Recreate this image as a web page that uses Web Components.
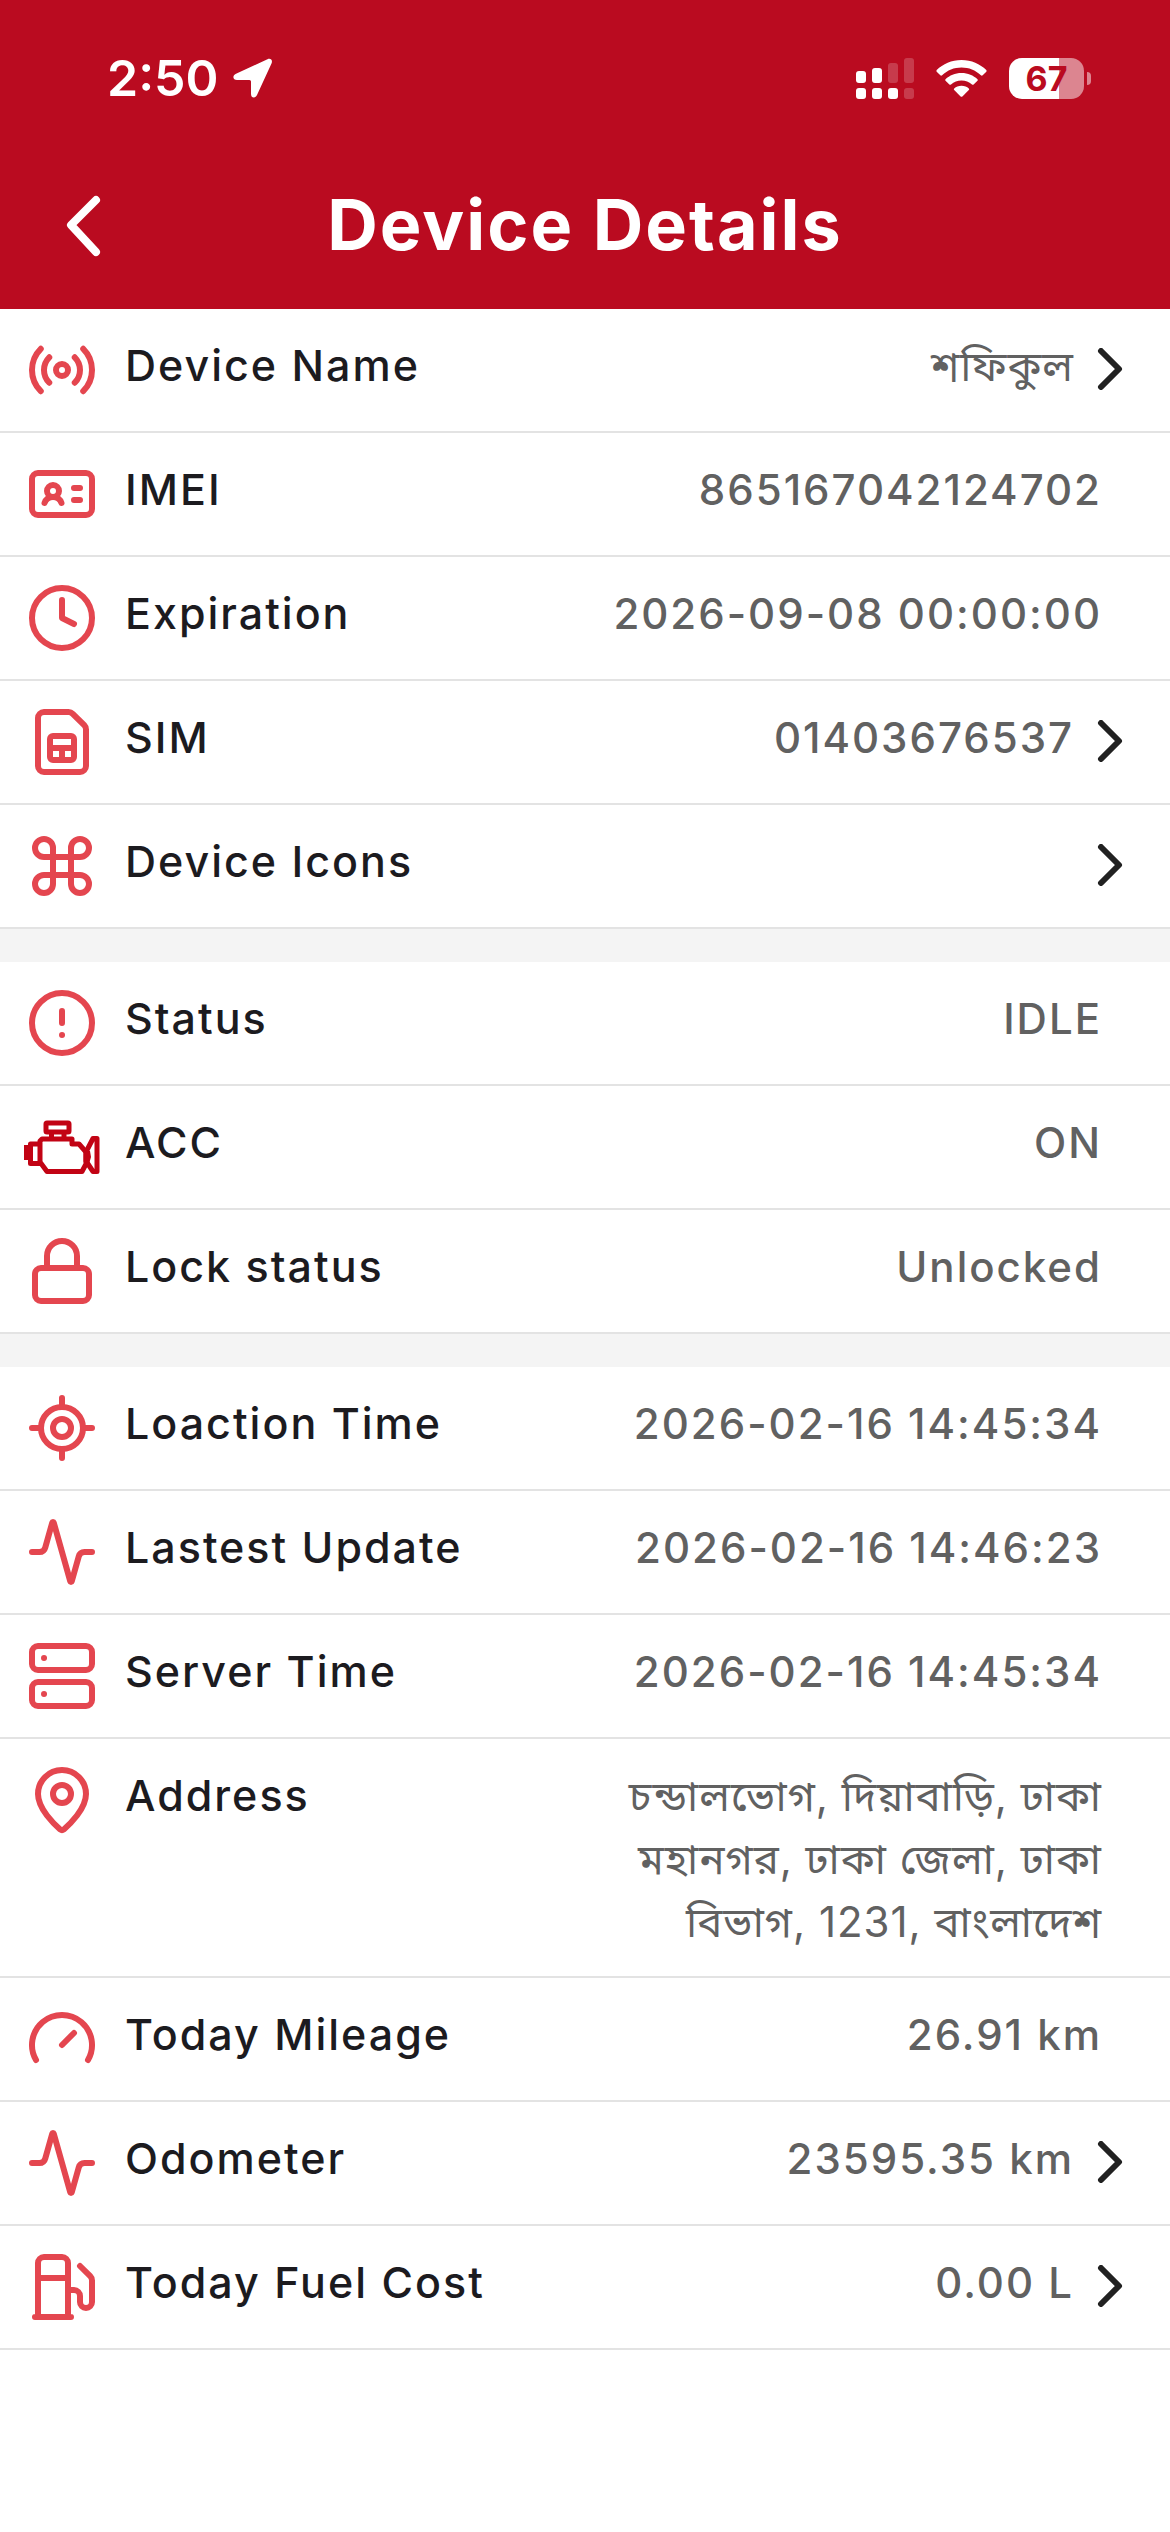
<!DOCTYPE html>
<html lang="en">
<head>
<meta charset="UTF-8">
<meta name="viewport" content="width=device-width, initial-scale=1.0">
<title>Device Details</title>
<style>
  body {
    margin: 0;
    background: #fff;
    font-family: Inter, "Noto Sans Bengali", "Noto Sans", sans-serif;
    color: #1c1b1f;
  }
</style>
</head>
<body>

<device-page>
  <status-bar slot="top" time="2:50" battery="67"></status-bar>
  <title-bar slot="top">Device Details</title-bar>

  <detail-group>
    <detail-row icon="radio" label="Device Name" link lang="bn">শফিকুল</detail-row>
    <detail-row icon="id" label="IMEI">865167042124702</detail-row>
    <detail-row icon="clock" label="Expiration">2026-09-08 00:00:00</detail-row>
    <detail-row icon="sim" label="SIM" link>01403676537</detail-row>
    <detail-row icon="command" label="Device Icons" link></detail-row>
  </detail-group>

  <detail-group>
    <detail-row icon="alert" label="Status">IDLE</detail-row>
    <detail-row icon="engine" label="ACC">ON</detail-row>
    <detail-row icon="lock" label="Lock status">Unlocked</detail-row>
  </detail-group>

  <detail-group>
    <detail-row icon="locate" label="Loaction Time">2026-02-16 14:45:34</detail-row>
    <detail-row icon="activity" label="Lastest Update">2026-02-16 14:46:23</detail-row>
    <detail-row icon="server" label="Server Time">2026-02-16 14:45:34</detail-row>
    <detail-row icon="pin" label="Address" lang="bn">চন্ডালভোগ, দিয়াবাড়ি, ঢাকা মহানগর, ঢাকা জেলা, ঢাকা বিভাগ, 1231, বাংলাদেশ</detail-row>
    <detail-row icon="gauge" label="Today Mileage">26.91 km</detail-row>
    <detail-row icon="activity" label="Odometer" link>23595.35 km</detail-row>
    <detail-row icon="fuel" label="Today Fuel Cost" link>0.00 L</detail-row>
  </detail-group>
</device-page>

<script>
// 24x24 stroke icons, the engine has its own box
const ICONS = {
  radio: '<path d="M16.247 7.761a6 6 0 0 1 0 8.478M19.075 4.933a10 10 0 0 1 0 14.134M4.925 19.067a10 10 0 0 1 0-14.134M7.753 16.239a6 6 0 0 1 0-8.478"/><circle cx="12" cy="12" r="2"/>',
  id: '<path d="M16 10h2M16 14h2M6.17 15a3 3 0 0 1 5.66 0"/><circle cx="9" cy="11" r="2"/><rect x="2" y="5" width="20" height="14" rx="2"/>',
  clock: '<circle cx="12" cy="12" r="10"/><path d="M12 6v6l4 2"/>',
  sim: '<path d="M12 14v4M8 14h8M14.172 2a2 2 0 0 1 1.414.586l3.828 3.828A2 2 0 0 1 20 7.828V20a2 2 0 0 1-2 2H6a2 2 0 0 1-2-2V4a2 2 0 0 1 2-2z"/><rect x="8" y="10" width="8" height="8" rx="1"/>',
  command: '<path d="M15 6v12a3 3 0 1 0 3-3H6a3 3 0 1 0 3 3V6a3 3 0 1 0-3 3h12a3 3 0 1 0-3-3"/>',
  alert: '<circle cx="12" cy="12" r="10"/><path d="M12 8v4M12 16h.01"/>',
  lock: '<rect x="3" y="11" width="18" height="11" rx="2"/><path d="M7 11V7a5 5 0 0 1 10 0v4"/>',
  locate: '<path d="M2 12h3M19 12h3M12 2v3M12 19v3"/><circle cx="12" cy="12" r="7"/><circle cx="12" cy="12" r="3"/>',
  activity: '<path d="M22 12h-2.48a2 2 0 0 0-1.93 1.46l-2.35 8.36a.25.25 0 0 1-.48 0L9.24 2.18a.25.25 0 0 0-.48 0l-2.35 8.36A2 2 0 0 1 4.49 12H2"/>',
  server: '<rect x="2" y="2" width="20" height="8" rx="2"/><rect x="2" y="14" width="20" height="8" rx="2"/><path d="M6 6h.01M6 18h.01"/>',
  pin: '<path d="M20 10c0 4.993-5.539 10.193-7.399 11.799a1 1 0 0 1-1.202 0C9.539 20.193 4 14.993 4 10a8 8 0 0 1 16 0"/><circle cx="12" cy="10" r="3"/>',
  gauge: '<path d="m12 14 4-4M3.34 19a10 10 0 1 1 17.32 0"/>',
  fuel: '<path d="M3 22h12M4 9h10M14 22V4a2 2 0 0 0-2-2H6a2 2 0 0 0-2 2v18M14 13h2a2 2 0 0 1 2 2v2a2 2 0 0 0 4 0V9.83a2 2 0 0 0-.59-1.42L18 5"/>'
};

const ENGINE = `
  <svg class="engine" viewBox="0 0 72 72" aria-hidden="true">
    <rect x="20" y="12" width="23" height="9" rx="1"/>
    <path d="M25.500 23v4M38 23v4"/>
    <path d="M16 28H46V33H53L60 41V53L56 60.500H21L14 51V30z"/>
    <path d="M14 33H4.500V52.500H14"/>
    <path d="M60 41L67 27.500H71V60.500H67L60 50z"/>
    <path class="solid" d="M-2 34H3V49H-2zM58 40H64L65 46L63 53H58z"/>
  </svg>`;

class DevicePage extends HTMLElement {
  constructor() {
    super();
    this.attachShadow({ mode: 'open' }).innerHTML = `
      <style>
        :host { display: block; }
        header { background: #ba0b20; color: #fff; }
        main { display: grid; gap: 33px; background: #f4f4f4; }
      </style>
      <header><slot name="top"></slot></header>
      <main><slot></slot></main>
    `;
  }
}

class StatusBar extends HTMLElement {
  connectedCallback() {
    this.attachShadow({ mode: 'open' }).innerHTML = `
      <style>
        :host {
          display: flex;
          justify-content: space-between;
          align-items: center;
          height: 156px;
          padding: 0 79px 0 107px;
          box-sizing: border-box;
        }
        .left, .right { display: flex; align-items: center; }
        .left { gap: 14px; }
        .right { gap: 22px; }
        .time { font-size: 50px; line-height: 60px; font-weight: 600; }
        svg { display: block; fill: #fff; }
        .dim { opacity: 0.2; }
        .battery { display: flex; align-items: center; gap: 3px; }
        .level {
          width: 75px;
          height: 41px;
          border-radius: 13px;
          background: linear-gradient(90deg, #fff ${this.getAttribute('battery')}%, #dc8590 0);
          color: #ba0b20;
          font-size: 34px;
          line-height: 41px;
          font-weight: 700;
          text-align: center;
        }
        .tip { width: 4px; height: 13px; border-radius: 0 4px 4px 0; background: #dc8590; }
      </style>
      <div class="left">
        <span class="time">${this.getAttribute('time')}</span>
        <svg width="40" height="40" viewBox="0 0 40 40" aria-hidden="true">
          <path d="M34.500 1.200L3 15.800C-1 17.800-0.200 22 4 22H16.500Q18 22 18 23.500V36C18 40.200 22.200 40.800 24 37L38.500 5.500C40 2 37.500-.2 34.500 1.200z"/>
        </svg>
      </div>
      <div class="right">
        <svg width="58" height="41" viewBox="0 0 58 41" aria-hidden="true">
          <rect y="13" width="10" height="12" rx="3"/>
          <rect x="16" y="10" width="10" height="15" rx="3"/>
          <rect class="dim" x="32" y="5" width="10" height="20" rx="3"/>
          <rect class="dim" x="48" width="10" height="25" rx="3"/>
          <rect y="30" width="10" height="11" rx="3"/>
          <rect x="16" y="30" width="10" height="11" rx="3"/>
          <rect x="32" y="30" width="10" height="11" rx="3"/>
          <rect class="dim" x="48" y="30" width="10" height="11" rx="3"/>
        </svg>
        <svg width="51" height="37" viewBox="0 0 51 37" aria-hidden="true">
          <path d="M25.500 0C35.500 0 44 4 50.300 10Q51 11 50.300 11.800L46.700 15.300Q45.800 16 44.900 15.300C39.500 10.300 33 7.600 25.500 7.600S11.500 10.300 6.100 15.300Q5.200 16 4.300 15.300L.7 11.800Q0 11 .7 10C7 4 15.500 0 25.500 0z"/>
          <path d="M25.500 13C32 13 37.300 15.500 41.500 19.200Q42.200 20 41.500 20.800L37.600 24.500Q36.800 25.100 36 24.500C33 21.900 29.600 20.500 25.500 20.500S18 21.900 15 24.500Q14.200 25.100 13.400 24.500L9.500 20.800Q8.800 20 9.500 19.200C13.700 15.500 19 13 25.500 13z"/>
          <path d="M25.500 25.800C28.500 25.800 31 26.900 32.800 28.400Q33.500 29.200 32.800 30L26.400 36.400Q25.500 37.200 24.600 36.400L18.200 30Q17.500 29.200 18.200 28.400C20 26.900 22.500 25.800 25.500 25.800z"/>
        </svg>
        <div class="battery">
          <div class="level">${this.getAttribute('battery')}</div>
          <div class="tip"></div>
        </div>
      </div>
    `;
  }
}

class TitleBar extends HTMLElement {
  constructor() {
    super();
    this.attachShadow({ mode: 'open' }).innerHTML = `
      <style>
        :host {
          display: grid;
          grid-template-columns: 72px 1fr 72px;
          align-items: center;
          padding: 27px 48px 42px;
        }
        button {
          width: 72px;
          height: 84px;
          padding: 0;
          border: 0;
          background: none;
        }
        svg { display: block; fill: none; stroke: #fff; stroke-width: 8; stroke-linecap: round; stroke-linejoin: round; }
        h1 {
          margin: 0;
          font-size: 70px;
          line-height: 84px;
          font-weight: 700;
          letter-spacing: 2px;
          text-align: center;
        }
      </style>
      <button type="button" aria-label="Back">
        <svg width="72" height="84" viewBox="0 0 72 84">
          <path d="M48 17L23 42L48 69"/>
        </svg>
      </button>
      <h1><slot></slot></h1>
    `;
  }
}

class DetailGroup extends HTMLElement {
  constructor() {
    super();
    this.attachShadow({ mode: 'open' }).innerHTML = `
      <style>
        :host { display: block; background: #fff; }
      </style>
      <slot></slot>
    `;
  }
}

class DetailRow extends HTMLElement {
  connectedCallback() {
    const name = this.getAttribute('icon');
    const link = this.hasAttribute('link');
    // rows that open something are buttons
    const tag = link ? 'button type="button"' : 'div';
    const icon = name === 'engine'
      ? ENGINE
      : `<svg class="icon" viewBox="0 0 24 24" aria-hidden="true">${ICONS[name]}</svg>`;

    this.attachShadow({ mode: 'open' }).innerHTML = `
      <style>
        :host { display: block; }
        .row {
          display: flex;
          align-items: flex-start;
          width: 100%;
          min-height: 124px;
          padding: 25px 68px 23px 26px;
          box-sizing: border-box;
          border: 0;
          border-bottom: 2px solid #e3e3e3;
          background: none;
          color: inherit;
          font-family: inherit;
          font-size: 42px;
          line-height: 63px;
          font-weight: 500;
          letter-spacing: 2px;
          text-align: left;
        }
        button.row { padding-right: 46px; }
        .icon, .engine {
          flex: none;
          width: 72px;
          height: 72px;
          margin-right: 27px;
          fill: none;
          stroke: #e4464f;
          stroke-width: 2;
          stroke-linecap: round;
          stroke-linejoin: round;
        }
        .engine { overflow: visible; stroke: #c20314; stroke-width: 5; stroke-linecap: butt; }
        .solid { fill: #c20314; stroke: none; }
        .label { flex: none; font-size: 43px; }
        .value {
          max-width: 46%;
          margin-left: auto;
          color: #616161;
          text-align: right;
        }
        :host(:lang(bn)) .value { font-weight: 400; letter-spacing: 1px; }
        .chevron {
          flex: none;
          width: 28px;
          height: 42px;
          margin: 14px 0 0 22px;
          fill: none;
          stroke: #212121;
          stroke-width: 6;
          stroke-linecap: round;
          stroke-linejoin: round;
        }
      </style>
      <${tag} class="row">
        ${icon}
        <span class="label">${this.getAttribute('label')}</span>
        <span class="value"><slot></slot></span>
        ${link ? '<svg class="chevron" viewBox="0 0 28 42" aria-hidden="true"><path d="M5 3L23 21L5 39"/></svg>' : ''}
      </${link ? 'button' : 'div'}>
    `;
  }
}

customElements.define('device-page', DevicePage);
customElements.define('status-bar', StatusBar);
customElements.define('title-bar', TitleBar);
customElements.define('detail-group', DetailGroup);
customElements.define('detail-row', DetailRow);
</script>
</body>
</html>
